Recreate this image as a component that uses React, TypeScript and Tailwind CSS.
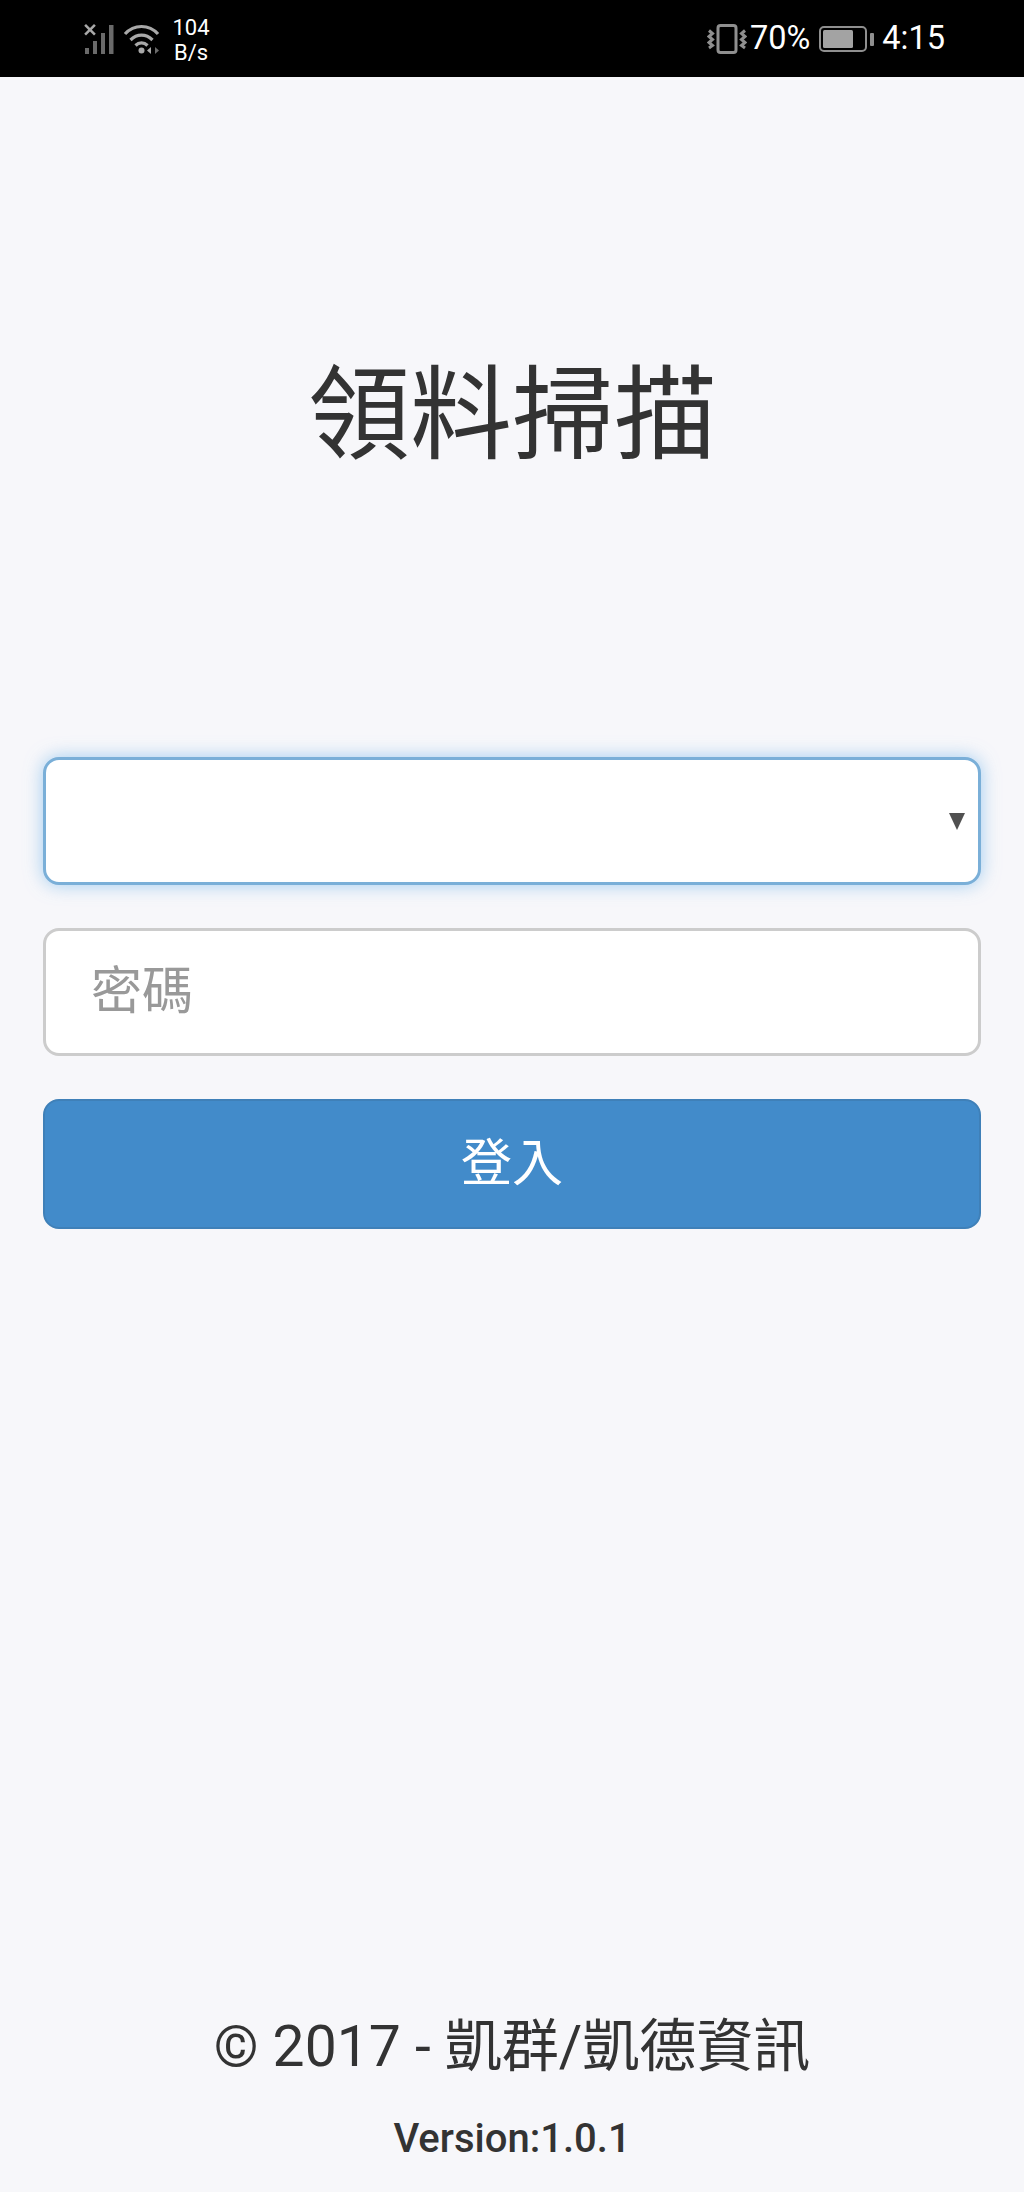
import React from "react";

const FONT = "font-['Roboto','Noto_Sans_CJK_TC',sans-serif]";

function SignalIcon() {
  return (
    <svg width="32" height="30" viewBox="0 0 32 30" fill="#6a6a6a">
      <path d="M2 0l4 4 4-4 1.800 1.800-4 4 4 4L10 11.600l-4-4-4 4-1.800-1.800 4-4-4-4z" fill="#a8a8a8" />
      <rect x="1" y="24" width="4" height="6" />
      <rect x="9" y="17" width="4" height="13" />
      <rect x="17" y="9" width="4" height="21" />
      <rect x="25" y="1" width="4.500" height="29" />
    </svg>
  );
}

function WifiIcon() {
  return (
    <svg width="38" height="30" viewBox="0 0 38 30" fill="none" stroke="#a8a8a8" strokeWidth="3.200">
      <path d="M2 10C11 0 26 0 35 10" />
      <path d="M7.500 16c6.500-6.500 15.500-6.500 22 0" />
      <path d="M12.500 21.500c3.500-3.500 8.500-3.500 12 0" />
      <circle cx="18.500" cy="26.500" r="3" fill="#a8a8a8" stroke="none" />
      <path d="M28 23v7l-4-3.500z" fill="#a8a8a8" stroke="none" />
      <path d="M32 23v7l4-3.500z" fill="#6a6a6a" stroke="none" />
    </svg>
  );
}

function VibrateIcon() {
  return (
    <svg width="40" height="30" viewBox="0 0 40 30" fill="none" stroke="#8f8f8f" strokeWidth="3">
      <rect x="11" y="1.500" width="18" height="27" rx="2.500" />
      <path d="M2 6.500l3.500 3-3.500 3 3.500 3-3.500 3 3.500 3-3.500 2.500" />
      <path d="M38 6.500l-3.500 3 3.500 3-3.500 3 3.500 3-3.500 3 3.500 2.500" />
    </svg>
  );
}

function BatteryIcon() {
  return (
    <svg width="56" height="28" viewBox="0 0 56 28">
      <rect x="1" y="2" width="46" height="24" rx="4" fill="none" stroke="#8f8f8f" strokeWidth="2" />
      <rect x="4" y="5" width="30" height="18" rx="1.500" fill="#a3a3a3" />
      <rect x="51" y="8" width="4" height="13" rx="1" fill="#8f8f8f" />
    </svg>
  );
}

function StatusBar() {
  return (
    <div className="flex h-[77px] items-center justify-between bg-black pl-[84px] pr-[79px] text-white">
      <div className="flex items-center gap-[7px]">
        <SignalIcon />
        <WifiIcon />
        <div className="ml-[3px] flex w-[40px] translate-y-[1px] flex-col items-center text-[22px] leading-[25px]">
          <span>104</span>
          <span>B/s</span>
        </div>
      </div>
      <div className="flex items-center">
        <VibrateIcon />
        <span className="ml-[3px] text-[32.500px] leading-none">70%</span>
        <div className="ml-[9px]"><BatteryIcon /></div>
        <span className="ml-[7px] text-[32.500px] leading-none">4:15</span>
      </div>
    </div>
  );
}

export default function App() {
  return (
    <div className={`flex h-[2192px] flex-col bg-[#f7f7fa] ${FONT}`}>
      <StatusBar />
      <main className="flex flex-1 flex-col px-[43px]">
        <h1 className="mt-[264px] text-center text-[102px] leading-[150px] font-normal text-[#333]">領料掃描</h1>
        <form className="mt-[266px] flex flex-col">
          <div className="flex h-[128px] items-center justify-end rounded-[16px] border-[3px] border-[#7aafd8] bg-white pr-[13px] shadow-[0_0_18px_rgba(102,175,233,0.6)]">
            <span className="h-0 w-0 border-x-[8.500px] border-t-[17px] border-x-transparent border-t-[#505050]" />
          </div>
          <div className="mt-[43px] flex h-[128px] items-center rounded-[16px] border-[3px] border-[#cccccc] bg-white pl-[45px] text-[51px] text-[#999]">
            密碼
          </div>
          <button
            type="button"
            className="mt-[43px] flex h-[130px] items-center justify-center rounded-[16px] border-2 border-[#3f80b8] bg-[#428bca] text-[51px] text-white"
          >
            登入
          </button>
        </form>
        <footer className="mt-auto flex flex-col items-center pb-[27px] text-[#333]">
          <p className="text-[57px] leading-[80px]">© 2017 - 凱群/凱德資訊</p>
          <p className="mt-[26px] text-[40px] leading-[52px] font-medium">Version:1.0.1</p>
        </footer>
      </main>
    </div>
  );
}
